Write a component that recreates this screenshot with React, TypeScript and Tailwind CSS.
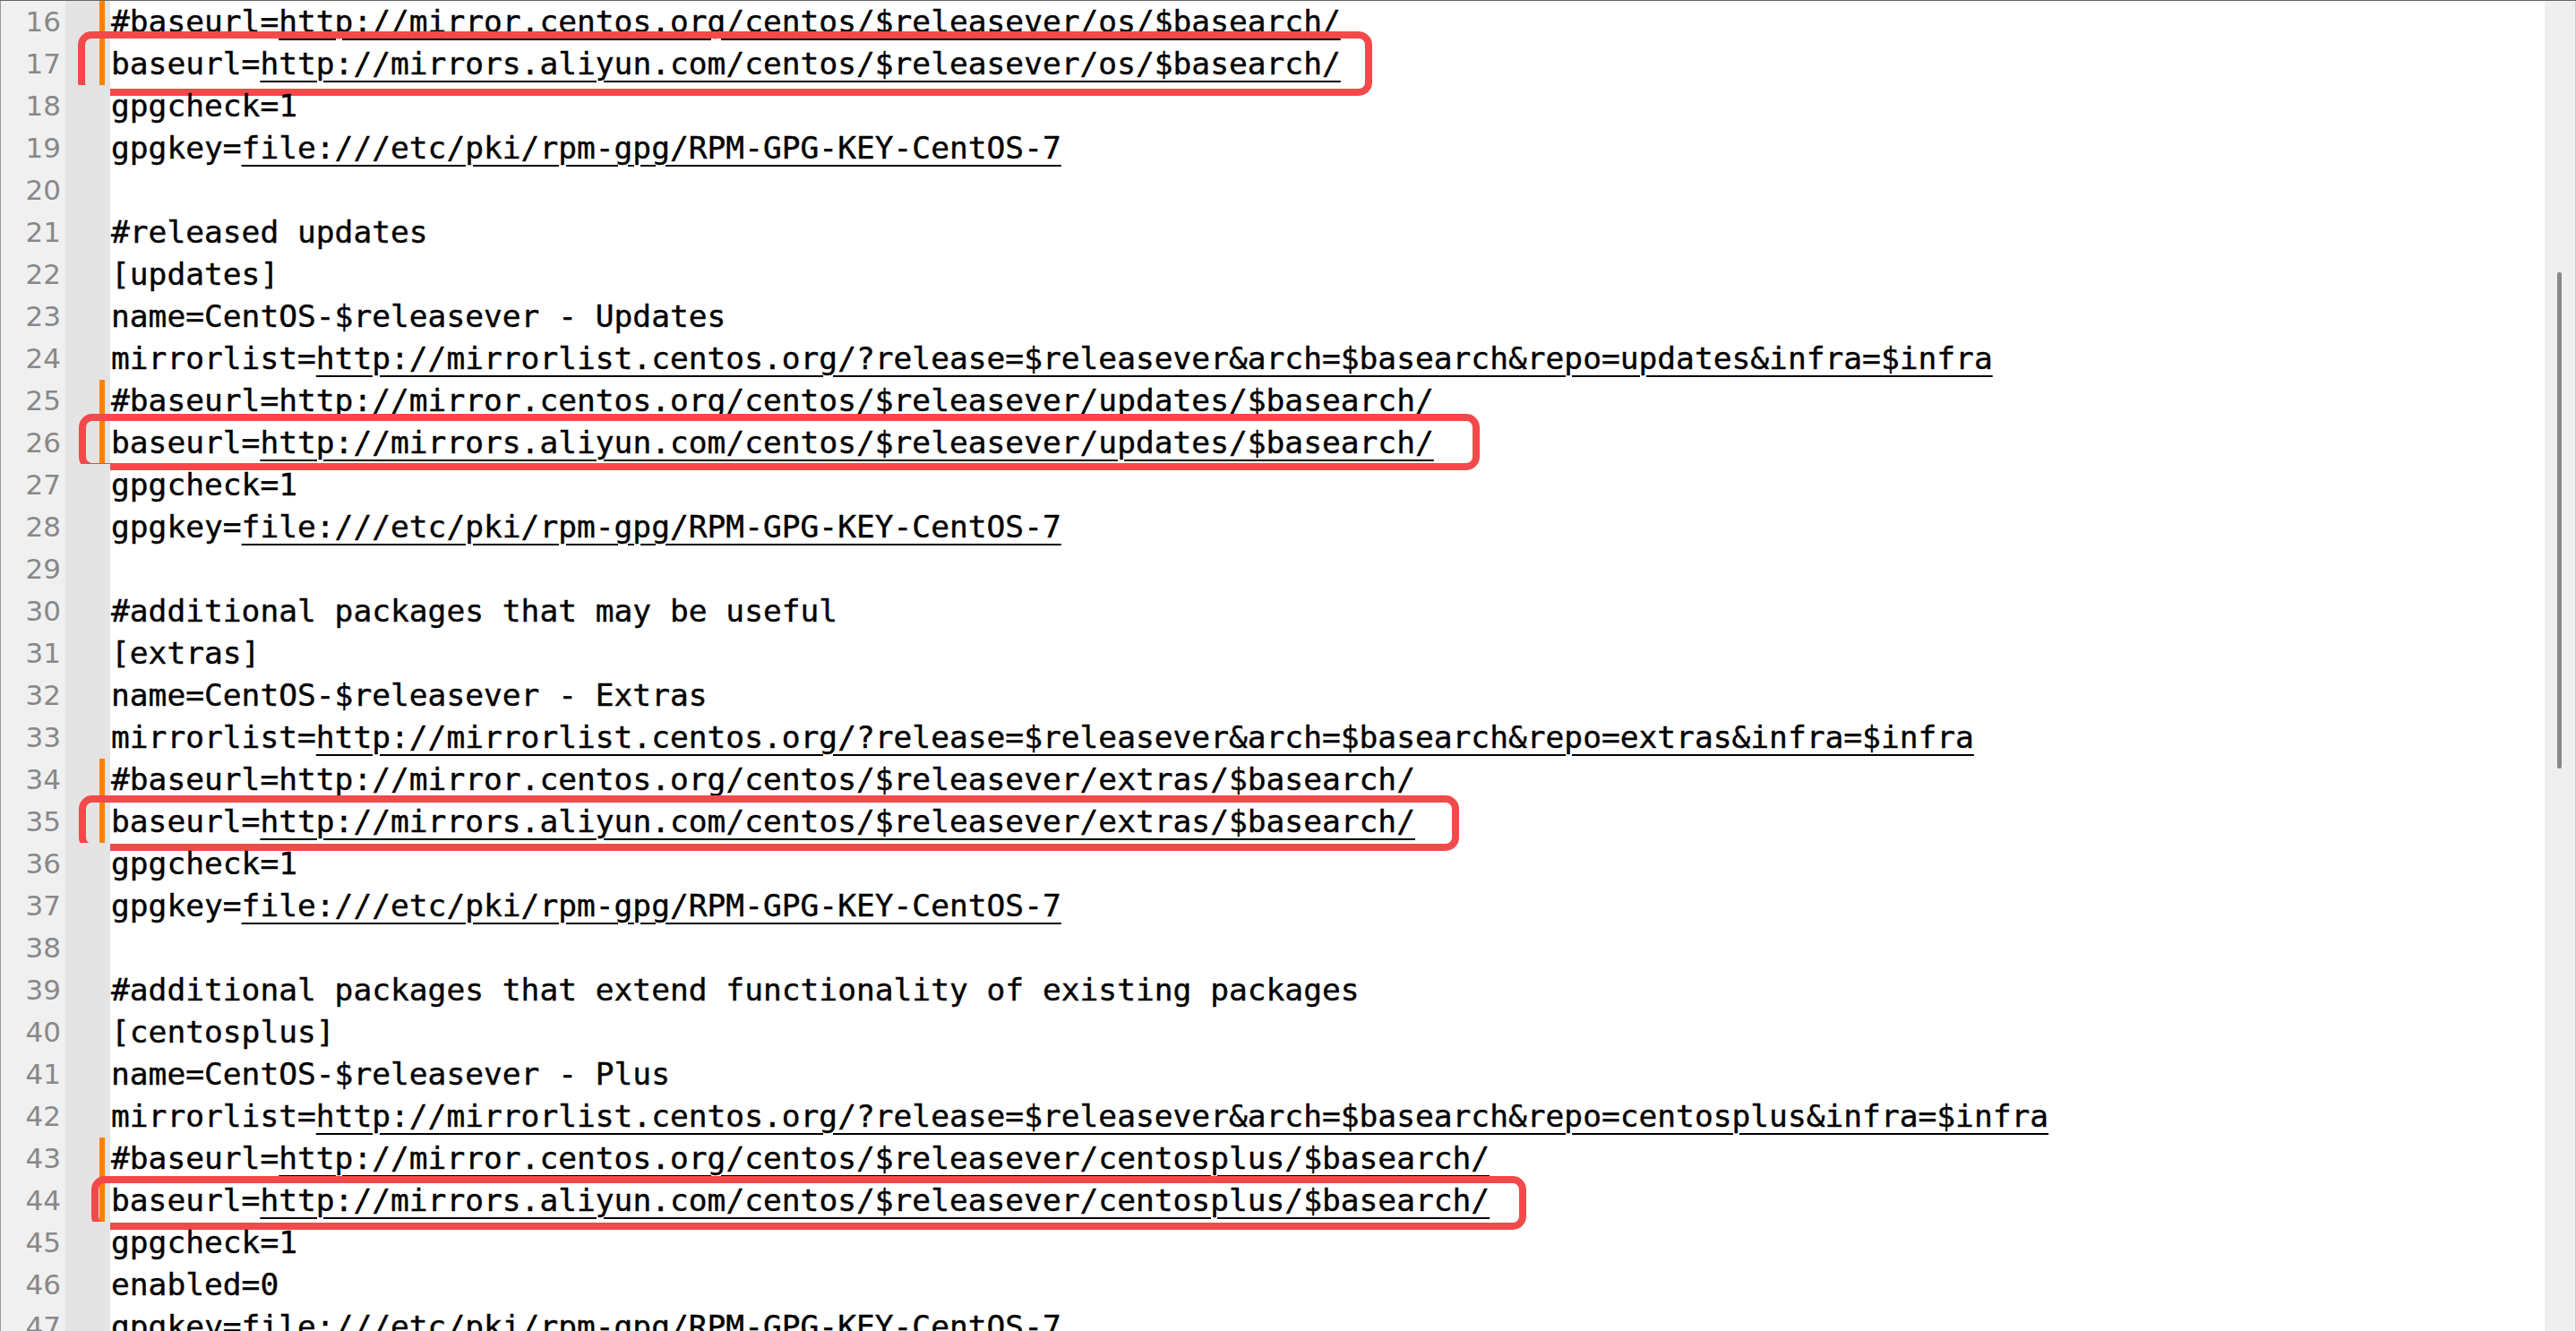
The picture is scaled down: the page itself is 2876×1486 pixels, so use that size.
import React from 'react';

interface Mark {
  top: string;
  height: string;
  left: string;
  width: string;
}

const startLine = 16;

const lines: string[] = [
  '#baseurl=http://mirror.centos.org/centos/$releasever/os/$basearch/',
  'baseurl=http://mirrors.aliyun.com/centos/$releasever/os/$basearch/',
  'gpgcheck=1',
  'gpgkey=file:///etc/pki/rpm-gpg/RPM-GPG-KEY-CentOS-7',
  '',
  '#released updates',
  '[updates]',
  'name=CentOS-$releasever - Updates',
  'mirrorlist=http://mirrorlist.centos.org/?release=$releasever&arch=$basearch&repo=updates&infra=$infra',
  '#baseurl=http://mirror.centos.org/centos/$releasever/updates/$basearch/',
  'baseurl=http://mirrors.aliyun.com/centos/$releasever/updates/$basearch/',
  'gpgcheck=1',
  'gpgkey=file:///etc/pki/rpm-gpg/RPM-GPG-KEY-CentOS-7',
  '',
  '#additional packages that may be useful',
  '[extras]',
  'name=CentOS-$releasever - Extras',
  'mirrorlist=http://mirrorlist.centos.org/?release=$releasever&arch=$basearch&repo=extras&infra=$infra',
  '#baseurl=http://mirror.centos.org/centos/$releasever/extras/$basearch/',
  'baseurl=http://mirrors.aliyun.com/centos/$releasever/extras/$basearch/',
  'gpgcheck=1',
  'gpgkey=file:///etc/pki/rpm-gpg/RPM-GPG-KEY-CentOS-7',
  '',
  '#additional packages that extend functionality of existing packages',
  '[centosplus]',
  'name=CentOS-$releasever - Plus',
  'mirrorlist=http://mirrorlist.centos.org/?release=$releasever&arch=$basearch&repo=centosplus&infra=$infra',
  '#baseurl=http://mirror.centos.org/centos/$releasever/centosplus/$basearch/',
  'baseurl=http://mirrors.aliyun.com/centos/$releasever/centosplus/$basearch/',
  'gpgcheck=1',
  'enabled=0',
  'gpgkey=file:///etc/pki/rpm-gpg/RPM-GPG-KEY-CentOS-7',
];

// lines with a change marker in the gutter
const changed = [16, 17, 25, 26, 34, 35, 43, 44];

// red annotation boxes drawn over the edited lines
const marks: Record<number, Mark> = {
  17: { top: 'top-[-13px]', height: 'h-[72px]', left: 'left-[87px]', width: 'w-[1445px]' },
  26: { top: 'top-[-9px]', height: 'h-[63px]', left: 'left-[88px]', width: 'w-[1564px]' },
  35: { top: 'top-[-6px]', height: 'h-[62px]', left: 'left-[88px]', width: 'w-[1541px]' },
  44: { top: 'top-[-4px]', height: 'h-[60px]', left: 'left-[102px]', width: 'w-[1602px]' },
};

const CodeText: React.FC<{ text: string }> = ({ text }) => {
  const eq = text.indexOf('=');
  if (eq === -1) return <>{text}</>;
  const key = text.slice(0, eq + 1);
  const value = text.slice(eq + 1);
  if (value.startsWith('http') || value.startsWith('file')) {
    return (
      <>
        {key}
        <span className="underline decoration-[2px] underline-offset-[7px]">{value}</span>
      </>
    );
  }
  return <>{text}</>;
};

const App: React.FC = () => {
  return (
    <div className="flex h-screen w-full overflow-hidden border-t border-t-[#666] bg-white">
      <div className="flex min-w-0 flex-1 flex-col">
        {lines.map((text, i) => {
          const num = startLine + i;
          const mark = marks[num];
          return (
            <div key={num} className="relative flex h-[47px] shrink-0">
              <div
                className="flex w-[73px] shrink-0 items-center justify-end border-l border-l-[#999] bg-[#f0f0f0] pr-[5px] text-[31px] text-[#888]"
                style={{ fontFamily: '"DejaVu Sans", sans-serif' }}
              >
                {num}
              </div>
              <div className="flex w-[50px] shrink-0 justify-end bg-[#e4e4e4] pr-[6px]">
                {changed.includes(num) && <div className="h-full w-[6px] bg-[#ff8000]" />}
              </div>
              <div
                className="flex items-center whitespace-pre pl-[1px] text-[34.55px] text-black [-webkit-text-stroke:0.4px_black]"
                style={{ fontFamily: '"DejaVu Sans Mono", monospace' }}
              >
                <CodeText text={text} />
              </div>
              {mark && (
                <div
                  className={`pointer-events-none absolute rounded-[15px] border-[8px] border-[#f24a4a] ${mark.top} ${mark.height} ${mark.left} ${mark.width}`}
                />
              )}
            </div>
          );
        })}
      </div>
      <div className="w-[35px] shrink-0 border-r border-r-[#ccc] bg-[#efefef] pt-[303px]">
        <div className="ml-[14px] h-[554px] w-[5px] rounded-[2px] bg-[#888]" />
      </div>
    </div>
  );
};

export default App;
